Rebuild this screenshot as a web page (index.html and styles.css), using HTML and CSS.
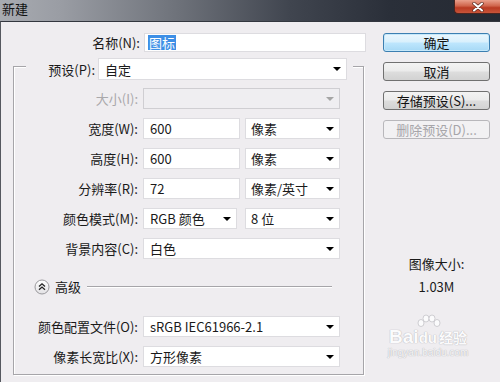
FILE: index.html
```html
<!DOCTYPE html>
<html lang="zh-CN">
<head>
<meta charset="utf-8">
<title>新建</title>
<link rel="stylesheet" href="styles.css">
</head>
<body>
<div class="window">
  <div class="titlebar">
    <span class="title">新建</span>
    <div class="close">
      <svg width="14" height="10" viewBox="0 0 14 10"><path d="M3 1.5 L11 8.5 M11 1.5 L3 8.5" stroke="#5a2a20" stroke-width="3.4" stroke-linecap="round"/><path d="M3 1.5 L11 8.5 M11 1.5 L3 8.5" stroke="#ffffff" stroke-width="2" stroke-linecap="round"/></svg>
    </div>
  </div>
  <div class="body">
    <div class="main">
      <div class="name-row">
        <span class="label name-label">名称(N):</span>
        <div class="input name-input"><span class="selected">图标</span></div>
      </div>
      <fieldset class="group">
        <legend class="preset-row">
          <span class="label preset-label">预设(P):</span>
          <div class="select preset-select"><span>自定</span><i class="arrow"></i></div>
        </legend>
        <div class="rows">
          <div class="row">
            <span class="label disabled">大小(I):</span>
            <div class="select wide disabled-box"><span></span><i class="arrow grey"></i></div>
          </div>
          <div class="row">
            <span class="label">宽度(W):</span>
            <div class="input num">600</div>
            <div class="select unit"><span>像素</span><i class="arrow"></i></div>
          </div>
          <div class="row">
            <span class="label">高度(H):</span>
            <div class="input num">600</div>
            <div class="select unit"><span>像素</span><i class="arrow"></i></div>
          </div>
          <div class="row">
            <span class="label">分辨率(R):</span>
            <div class="input num">72</div>
            <div class="select unit"><span>像素/英寸</span><i class="arrow"></i></div>
          </div>
          <div class="row">
            <span class="label">颜色模式(M):</span>
            <div class="select mode"><span>RGB 颜色</span><i class="arrow"></i></div>
            <div class="select unit"><span>8 位</span><i class="arrow"></i></div>
          </div>
          <div class="row">
            <span class="label">背景内容(C):</span>
            <div class="select wide"><span>白色</span><i class="arrow"></i></div>
          </div>
        </div>
        <div class="adv-head">
          <svg class="adv-icon" width="16" height="16" viewBox="0 0 16 16">
            <defs><linearGradient id="g" x1="0" y1="0" x2="0" y2="1"><stop offset="0" stop-color="#ffffff"/><stop offset="1" stop-color="#e2e1e4"/></linearGradient></defs>
            <circle cx="8" cy="8" r="7" fill="url(#g)" stroke="#9a999d" stroke-width="1"/>
            <path d="M5 7.5 L8 4.8 L11 7.5 M5 10.8 L8 8.1 L11 10.8" fill="none" stroke="#222" stroke-width="1.3"/>
          </svg>
          <span class="adv-text">高级</span>
          <div class="adv-line"></div>
        </div>
        <div class="rows adv-rows">
          <div class="row">
            <span class="label">颜色配置文件(O):</span>
            <div class="select wide"><span>sRGB IEC61966-2.1</span><i class="arrow"></i></div>
          </div>
          <div class="row">
            <span class="label">像素长宽比(X):</span>
            <div class="select wide"><span>方形像素</span><i class="arrow"></i></div>
          </div>
        </div>
      </fieldset>
    </div>
    <div class="side">
      <div class="buttons">
        <div class="btn default">确定</div>
        <div class="btn">取消</div>
        <div class="btn">存储预设(S)...</div>
        <div class="btn off">删除预设(D)...</div>
      </div>
      <div class="size-info">
        <div class="size-label">图像大小:</div>
        <div class="size-value">1.03M</div>
      </div>
      <div class="watermark">
        <svg class="wm-paw" width="26" height="16" viewBox="0 0 26 16">
          <g fill="#fbfbfc" stroke="#c4c3c8" stroke-width="0.8">
            <ellipse cx="6" cy="9" rx="3" ry="3.5"/>
            <ellipse cx="11" cy="4.5" rx="3" ry="3.5"/>
            <ellipse cx="17" cy="4.5" rx="3" ry="3.5"/>
            <ellipse cx="22" cy="9" rx="3" ry="3.5"/>
          </g>
        </svg>
        <div class="wm-main"><span class="wm-bai">Bai</span><span class="wm-du">du</span><span class="wm-jy">经验</span></div>
        <div class="wm-url">jingyan.baidu.com</div>
      </div>
    </div>
  </div>
</div>
</body>
</html>
```
FILE: styles.css
```css
* { box-sizing: border-box; }
html, body { margin: 0; padding: 0; }
body {
  width: 500px;
  height: 382px;
  overflow: hidden;
  font-family: "Noto Sans CJK SC", "Noto Sans", sans-serif;
  font-size: 13px;
  color: #1a1a1a;
  background: #efedf0;
}
.window { width: 500px; height: 382px; display: flex; flex-direction: column; }
.titlebar {
  height: 21px;
  display: flex;
  align-items: flex-start;
  background: linear-gradient(90deg, #a8abb1 0%, #9a9da4 12%, #6f737b 35%, #40454f 58%, #2a2f39 78%, #252a33 100%);
}
.title { padding-left: 2px; line-height: 17px; font-size: 13px; color: #111; }
.close {
  margin-left: auto;
  width: 46px;
  height: 14px;
  display: flex;
  align-items: center;
  justify-content: center;
  background: linear-gradient(180deg, #e9a08c 0%, #d0654c 45%, #b93a22 60%, #c8553a 100%);
  border: 1px solid #4b2520;
  border-top: none;
  border-right: none;
  border-bottom-left-radius: 4px;
}
.body {
  flex: 1;
  display: flex;
  border-top: 1px solid #33373f;
  border-left: 1px solid #55585f;
  background: #efedf0;
}
.main { width: 369px; padding: 11px 0 0 12px; }
.label { white-space: nowrap; text-align: right; line-height: 19px; }
.name-row { display: flex; align-items: center; height: 19px; }
.name-label { width: 127px; margin-right: 4px; }
.input, .select {
  height: 21px;
  background: #fff;
  border: 1px solid #dddce0;
  display: flex;
  align-items: center;
  padding: 0 5px 0 5px;
  white-space: nowrap;
  line-height: 17px;
}
.name-input { width: 222px; height: 19px; padding-left: 3px; }
.selected { background: #3d8fe6; color: #fff; padding: 0 1px; line-height: 15px; }
.group {
  margin: 0;
  padding: 0;
  width: 351px;
  height: 323px;
  border: 1px solid #a6a5a9;
  box-shadow: inset 1px 1px 0 #fff, 1px 1px 0 #fff;
}
.preset-row {
  display: flex;
  align-items: center;
  margin-left: 12px;
  padding: 6px 6px 0 0;
  background: #efedf0;
}
.preset-label { width: 69px; margin-right: 3px; }
.preset-select { width: 249px; height: 22px; padding-left: 6px; }
.arrow {
  margin-left: auto;
  width: 0;
  height: 0;
  border-left: 4px solid transparent;
  border-right: 4px solid transparent;
  border-top: 4px solid #000;
}
.arrow.grey { border-top-color: #a5a5a5; }
.rows { display: flex; flex-direction: column; gap: 9px; padding-top: 8px; }
.row { display: flex; align-items: center; height: 21px; }
.row .label { width: 124px; margin-right: 5px; }
.label.disabled { color: #a9a8ab; }
.wide { width: 197px; }
.disabled-box { background: #efeef1; border-color: #cfced2; }
.num { width: 97px; }
.unit { width: 95px; margin-left: 5px; }
.mode { width: 94px; margin-right: 3px; }
.mode + .unit { margin-left: 5px; }
.select.wide, .num, .mode { padding-left: 6px; }
.adv-head { display: flex; align-items: center; height: 16px; margin-top: 20px; padding-left: 20px; }
.adv-icon { display: block; flex: none; }
.adv-text { margin-left: 5px; line-height: 16px; }
.adv-line { width: 245px; margin-left: 6px; height: 2px; border-top: 1px solid #a6a5a9; border-bottom: 1px solid #fff; }
.adv-rows { padding-top: 21px; }
.side { flex: 1; padding: 11px 0 0 13px; display: flex; flex-direction: column; }
.buttons { display: flex; flex-direction: column; gap: 10px; width: 107px; }
.btn {
  height: 19px;
  border: 1px solid #707070;
  border-radius: 3px;
  background: linear-gradient(180deg, #f3f3f3 0%, #ebebeb 48%, #dddddd 52%, #d2d2d2 100%);
  text-align: center;
  line-height: 17px;
  font-size: 13px;
  color: #111;
  white-space: nowrap;
}
.btn.default {
  border-color: #3c7fb1;
  background: linear-gradient(180deg, #eaf6fd 0%, #d9f0fc 48%, #bee6fd 52%, #a7d9f5 100%);
  box-shadow: inset 0 0 0 1px #c6e8fa;
}
.btn.off {
  border-color: #b8b7bb;
  background: #f2f1f3;
  color: #a6a5a9;
}
.size-info { width: 107px; margin-top: 116px; text-align: center; display: flex; flex-direction: column; gap: 5px; }
.size-label, .size-value { line-height: 18px; }
.watermark { width: 90px; margin-top: 18px; text-align: center; color: #fbfbfc; text-shadow: 0 0 1px #b9b8bd, 0 0 1px #b9b8bd; display: flex; flex-direction: column; align-items: center; }
.wm-paw { display: block; margin-bottom: -2px; }
.wm-main { font-family: "Liberation Sans", sans-serif; font-weight: bold; font-size: 19px; line-height: 18px; white-space: nowrap; }
.wm-du { font-size: 15px; }
.wm-jy { font-family: "Noto Sans CJK SC", sans-serif; font-size: 14px; margin-left: 2px; }
.wm-url { font-family: "Liberation Sans", sans-serif; font-size: 10px; line-height: 11px; color: #f6f6f7; }
```
